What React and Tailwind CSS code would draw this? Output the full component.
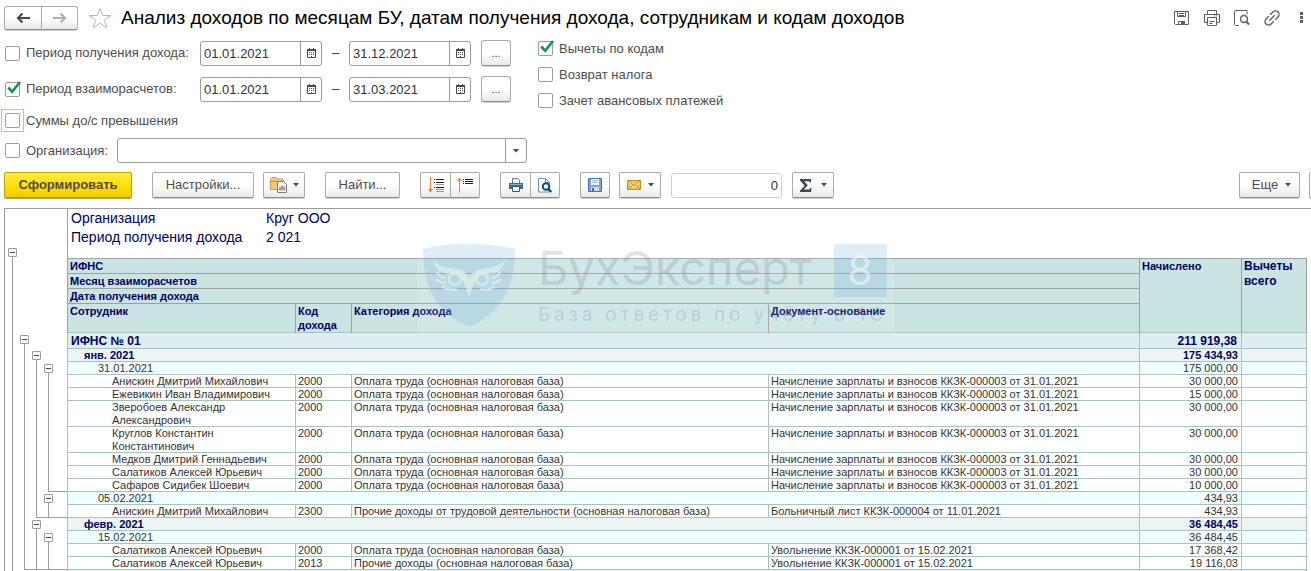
import React, { useState } from 'react';

const BTN = 'flex shrink-0 items-center justify-center border border-[#ababab] border-b-[#8f8f8f] bg-linear-to-b from-white from-50% to-[#e9e9e9] text-[#4d4d4d] shadow-[0_1px_0_#d0d0d0]';

// Строки отчета: level - уровень группировки, end - уровень, который закрывается этой строкой
const ROWS = [
    { level: 1, kind: 'ifns', name: 'ИФНС № 01', sum: '211 919,38' },
    { level: 2, kind: 'month', name: 'янв. 2021', sum: '175 434,93' },
    { level: 3, kind: 'date', name: '31.01.2021', sum: '175 000,00' },
    { kind: 'item', depth: 4, name: 'Анискин Дмитрий Михайлович', code: '2000', cat: 'Оплата труда (основная налоговая база)', doc: 'Начисление зарплаты и взносов ККЗК-000003 от 31.01.2021', sum: '30 000,00' },
    { kind: 'item', depth: 4, name: 'Ежевикин Иван Владимирович', code: '2000', cat: 'Оплата труда (основная налоговая база)', doc: 'Начисление зарплаты и взносов ККЗК-000003 от 31.01.2021', sum: '15 000,00' },
    { kind: 'item', depth: 4, name: 'Зверобоев Александр Александрович', code: '2000', cat: 'Оплата труда (основная налоговая база)', doc: 'Начисление зарплаты и взносов ККЗК-000003 от 31.01.2021', sum: '30 000,00' },
    { kind: 'item', depth: 4, name: 'Круглов Константин Константинович', code: '2000', cat: 'Оплата труда (основная налоговая база)', doc: 'Начисление зарплаты и взносов ККЗК-000003 от 31.01.2021', sum: '30 000,00' },
    { kind: 'item', depth: 4, name: 'Медков Дмитрий Геннадьевич', code: '2000', cat: 'Оплата труда (основная налоговая база)', doc: 'Начисление зарплаты и взносов ККЗК-000003 от 31.01.2021', sum: '30 000,00' },
    { kind: 'item', depth: 4, name: 'Салатиков Алексей Юрьевич', code: '2000', cat: 'Оплата труда (основная налоговая база)', doc: 'Начисление зарплаты и взносов ККЗК-000003 от 31.01.2021', sum: '30 000,00' },
    { kind: 'item', depth: 4, end: 3, name: 'Сафаров Сидибек Шоевич', code: '2000', cat: 'Оплата труда (основная налоговая база)', doc: 'Начисление зарплаты и взносов ККЗК-000003 от 31.01.2021', sum: '10 000,00' },
    { level: 3, kind: 'date', name: '05.02.2021', sum: '434,93' },
    { kind: 'item', depth: 4, end: 2, name: 'Анискин Дмитрий Михайлович', code: '2300', cat: 'Прочие доходы от трудовой деятельности (основная налоговая база)', doc: 'Больничный лист ККЗК-000004 от 11.01.2021', sum: '434,93' },
    { level: 2, kind: 'month', name: 'февр. 2021', sum: '36 484,45' },
    { level: 3, kind: 'date', name: '15.02.2021', sum: '36 484,45' },
    { kind: 'item', depth: 4, name: 'Салатиков Алексей Юрьевич', code: '2000', cat: 'Оплата труда (основная налоговая база)', doc: 'Увольнение ККЗК-000001 от 15.02.2021', sum: '17 368,42' },
    { kind: 'item', depth: 4, end: 1, name: 'Салатиков Алексей Юрьевич', code: '2013', cat: 'Прочие доходы (основная налоговая база)', doc: 'Увольнение ККЗК-000001 от 15.02.2021', sum: '19 116,03' },
];

const ROW_STYLES = {
    ifns: { row: 'bg-[#dceef0] text-xs leading-4 font-bold text-[#00005c]', name: 'pl-1', sum: 'pr-1' },
    month: { row: 'bg-[#edf5f4] text-[11px] leading-[13px] font-bold text-[#00005c]', name: 'pl-[17px]', sum: 'pr-[3px]' },
    date: { row: 'bg-[#f0ffff] text-[11px] leading-[13px] text-[#333]', name: 'pl-[31px]', sum: 'pr-[3px]' },
    item: { row: 'bg-white text-[11px] leading-[13px] text-[#333]', name: 'pl-[45px]', sum: 'pr-[3px]' },
};

const CELL = 'p-0 pl-[3px] align-top font-normal shadow-[inset_1px_-1px_0_#a9c5ba]';
const HEAD = 'p-0 pl-[3px] text-left align-top font-bold shadow-[inset_1px_-1px_0_#a0a0a0]';
const HEAD_LAST = 'p-0 pl-[3px] text-left align-top font-bold shadow-[inset_1px_0_0_#a0a0a0,inset_0_-1px_0_#a9c5ba]';

function Caret() {
    return (
        <svg width="6" height="4" viewBox="0 0 6 4" className="shrink-0" aria-hidden="true">
            <path d="M0 0h6L3 3.500z" fill="#4a4a4a" />
        </svg>
    );
}

function CheckBox({ id, label, defaultChecked = false, focused = false }) {
    return (
        <div className="flex items-center text-[13px] text-[#4d4d4d]">
            <span className={focused ? 'relative -m-1 mr-0 flex border border-[#f5c518] p-[3px]' : 'relative flex'}>
                <input id={id} type="checkbox" defaultChecked={defaultChecked} className="peer size-[15px] appearance-none rounded-[2px] border border-[#9c9c9c] bg-white" />
                <svg className="pointer-events-none absolute -top-px left-[2px] hidden peer-checked:block" width="15" height="14" viewBox="0 0 15 14" aria-hidden="true">
                    <path d="M1.200 6.500l4 4.300L13 1" fill="none" stroke="#0a9a4c" strokeWidth="2.600" />
                </svg>
            </span>
            <label htmlFor={id} className={focused ? 'pl-[2px] whitespace-nowrap' : 'pl-[6px] whitespace-nowrap'}>{label}</label>
        </div>
    );
}

function DateField({ label, value }) {
    return (
        <div className="flex h-[25px] w-[122px] shrink-0 rounded-[3px] border border-[#9c9c9c] bg-white">
            <input aria-label={label} defaultValue={value} className="w-[99px] pt-px pl-[3px] text-[13px] text-[#333] outline-none" />
            <button type="button" aria-label="Выбрать дату" className="flex flex-1 items-center justify-center border-l border-[#9c9c9c]">
                <svg width="9" height="10" viewBox="0 0 9 10" aria-hidden="true">
                    <path d="M.5 1.500h8v8h-8z" fill="none" stroke="#4a4a4a" />
                    <path d="M0 1h9v2H0zM2 0h1v1H2zM6 0h1v1H6z" fill="#4a4a4a" />
                    <path d="M2 4h1v1H2zM4 4h1v1H4zM6 4h1v1H6zM2 6h1v1H2zM4 6h1v1H4zM6 6h1v1H6zM4 8h1v1H4z" fill="#4a4a4a" />
                </svg>
            </button>
        </div>
    );
}

function PeriodRow({ id, label, from, to, checked }) {
    return (
        <div className="flex h-[26px] items-center">
            <div className="w-[195px]">
                <CheckBox id={id} label={label} defaultChecked={checked} />
            </div>
            <DateField label="Начало периода" value={from} />
            <span className="w-[27px] text-center text-[13px] text-[#333]">–</span>
            <DateField label="Конец периода" value={to} />
            <button type="button" aria-label="Выбрать период" className={`${BTN} ml-[10px] h-[26px] w-[30px] rounded-[3px] text-[11px]`}>...</button>
        </div>
    );
}

// Линии и кнопки группировок слева от таблицы
function Tree({ level, depth, end = 9 }) {
    return (
        <div className="flex h-full pl-px">
            {[0, 1, 2, 3].map((i) => (
                <div key={i} className={`flex w-3 flex-col ${i > end ? 'border-b border-[#9c9c9c]' : ''}`}>
                    {i === level && (
                        <button type="button" aria-label="Свернуть группу" className="mt-[2px] ml-[2px] flex size-[9px] shrink-0 items-center justify-center rounded-[1px] border border-[#9c9c9c] bg-white">
                            <span className="h-px w-[5px] bg-[#444]"></span>
                        </button>
                    )}
                    {i <= (level ?? depth) && (
                        <div className={`ml-[6px] flex-1 border-l border-[#9c9c9c] ${i === end ? 'border-b' : ''}`}></div>
                    )}
                </div>
            ))}
            <div className={`flex-1 ${end < 9 ? 'border-b border-[#9c9c9c]' : ''}`}></div>
        </div>
    );
}

function Watermark() {
    return (
        <svg className="pointer-events-none absolute top-[32px] left-[412px]" width="477" height="92" viewBox="0 0 477 92" aria-hidden="true">
            <rect width="477" height="92" fill="#fff" opacity=".12" />
            <g opacity=".2">
                <path d="M6 8C32 1 72 1 98 8C98 46 85 72 52 86C19 72 6 46 6 8z" fill="#5aa5d8" />
                <path d="M417 3h53v53h-53z" fill="#5aa5d8" />
            </g>
            <g fill="none" stroke="#e4f2ec" strokeOpacity=".65" strokeWidth="2.500">
                <circle cx="38" cy="38" r="6" />
                <circle cx="65" cy="38" r="6" />
                <path d="M20 31c2 4 5 6 9 6M19 38c3 3 6 4 10 4M25 45c4 3 9 5 15 3M83 31c-2 4-5 6-9 6M84 38c-3 3-6 4-10 4M78 45c-4 3-9 5-15 3" />
            </g>
            <path d="M16 19C24 27 32 27 40 28C47 29 50 33 52 38C54 33 57 29 64 28C72 27 80 27 88 19C86 29 80 33 70 33C62 33 58 38 56 45L52 56L48 45C46 38 42 33 34 33C24 33 18 29 16 19z" fill="#e4f2ec" fillOpacity=".65" />
            <g fill="#4b4b6b" fillOpacity=".17" className="font-[Inter,sans-serif]">
                <text x="121" y="44" fontSize="47">БухЭксперт</text>
                <text x="121" y="80" fontSize="19" className="tracking-[0.2em]">База ответов по учёту в 1С</text>
            </g>
            <text x="443" y="44" fontSize="41" textAnchor="middle" fill="#fff" fillOpacity=".5" className="font-[Inter,sans-serif]">8</text>
        </svg>
    );
}

function TitleIcons() {
    return (
        <div className="ml-auto flex items-center gap-[14px] pr-[4px] text-[#5f5f5f]">
            <button type="button" aria-label="Сохранить">
                <svg width="16" height="16" viewBox="0 0 16 16" fill="none" stroke="currentColor">
                    <path d="M.5 1.500h14v13h-13l-1-1zM3.500 1.500v5h8v-5M5 3.500h5M5 5.500h5M4.500 14.500v-3h6v3" />
                    <path d="M7 11h4v4H7z" fill="currentColor" stroke="none" />
                </svg>
            </button>
            <button type="button" aria-label="Печать">
                <svg width="16" height="16" viewBox="0 0 16 16" fill="none" stroke="currentColor">
                    <path d="M3.500 4.500v-4h9v4M3.500 12.500h-3v-8h15v8h-3M3.500 7.500h9v8h-9zM5.500 11.500h5M5.500 13.500h3M10 6h1M12 6h1" />
                </svg>
            </button>
            <button type="button" aria-label="Предварительный просмотр">
                <svg width="16" height="16" viewBox="0 0 16 16" fill="none" stroke="currentColor">
                    <path d="M5 15.500H1.500l-1-1v-13l1-1h11.500v4" />
                    <circle cx="10" cy="9" r="3.500" strokeWidth="1.400" />
                    <path d="M12.300 11.500l2.700 3" strokeWidth="2" />
                </svg>
            </button>
            <button type="button" aria-label="Получить ссылку">
                <svg width="16" height="16" viewBox="3 3 18 18" fill="none" stroke="currentColor" strokeWidth="1.600" strokeLinecap="round">
                    <g transform="rotate(-45 12 12)">
                        <path d="M10 16H6.500a4 4 0 0 1 0-8H10M14 8h3.500a4 4 0 0 1 0 8H14M8.500 12h7" />
                    </g>
                </svg>
            </button>
            <button type="button" aria-label="Меню" className="ml-[3px]">
                <svg width="10" height="16" viewBox="0 0 10 16" fill="currentColor">
                    <path d="M3 2h3v3H3zM3 6h3v3H3zM3 10h3v3H3z" />
                </svg>
            </button>
        </div>
    );
}

function Toolbar() {
    return (
        <div className="mt-[9px] flex items-center overflow-hidden pb-[2px] pl-1 text-[13px]">
            <button type="button" className="flex h-[26px] w-32 shrink-0 items-center justify-center rounded-[2px] border border-[#b9a100] bg-linear-to-b from-[#ffec3d] via-[#ffe000] to-[#efcb00] font-bold text-[#4d4d4d] shadow-[0_1px_0_#b0a050]">Сформировать</button>
            <button type="button" className={`${BTN} ml-5 h-[26px] w-[102px] rounded-[2px]`}>Настройки...</button>
            <button type="button" aria-label="Варианты отчета" className={`${BTN} ml-[9px] h-[26px] w-[42px] gap-[6px] rounded-[2px]`}>
                <svg width="17" height="16" viewBox="0 0 17 16" aria-hidden="true">
                    <path d="M.5 12.500v-10l1.500-2h4l1 1.500h5.500l1 1v9.500z" fill="#f2c878" stroke="#cf9a45" />
                    <path d="M1 4.500h12" stroke="#cf9a45" />
                    <path d="M7.500 4.500h6l3 3v8h-9z" fill="#fff" stroke="#6a8299" />
                    <path d="M10 10v3.500M14 9.500v4" stroke="#e0503a" strokeWidth="1.400" />
                    <path d="M12 8.500v5" stroke="#3aa05a" strokeWidth="1.400" />
                </svg>
                <Caret />
            </button>
            <button type="button" className={`${BTN} ml-5 h-[26px] w-[75px] rounded-[2px]`}>Найти...</button>
            <button type="button" aria-label="Развернуть группы" className={`${BTN} ml-5 h-[26px] w-[31px] rounded-l-[2px]`}>
                <svg width="16" height="16" viewBox="0 0 16 16" aria-hidden="true">
                    <path d="M2.500 0v12" stroke="#f0804a" />
                    <path d="M0 12h5l-2.500 3.500z" fill="#f0804a" />
                    <path d="M6 2.500h1M8 2.500h8M6 5.500h1M8 5.500h8M6 10.500h1M8 10.500h8" stroke="#222" />
                    <path d="M8 7.500h8M8 12.500h8M8 14.500h8" stroke="#999" />
                </svg>
            </button>
            <button type="button" aria-label="Свернуть группы" className={`${BTN} -ml-px h-[26px] w-[30px] rounded-r-[2px]`}>
                <svg width="16" height="16" viewBox="0 0 16 16" aria-hidden="true">
                    <path d="M2.500 15.500V3" stroke="#f0804a" />
                    <path d="M0 4h5L2.500.500z" fill="#f0804a" />
                    <path d="M6 2.500h1M8 2.500h8M6 4.500h1M8 4.500h8M6 6.500h1M8 6.500h8" stroke="#222" />
                </svg>
            </button>
            <button type="button" aria-label="Печать отчета" className={`${BTN} ml-5 h-[26px] w-[31px] rounded-l-[2px]`}>
                <svg width="14" height="14" viewBox="0 0 14 14" aria-hidden="true">
                    <path d="M3.500 5V.5h5l2 2V5" fill="#fff" stroke="#5a7690" />
                    <path d="M0 5h14v6H0z" fill="#3f6c95" />
                    <path d="M1 6.500h12" stroke="#86abcb" />
                    <path d="M3.500 8.500h7v5h-7z" fill="#fff" stroke="#35597c" />
                </svg>
            </button>
            <button type="button" aria-label="Просмотр отчета" className={`${BTN} -ml-px h-[26px] w-[30px] rounded-r-[2px]`}>
                <svg width="14" height="15" viewBox="0 0 14 15" aria-hidden="true">
                    <path d="M.5.5h7l4 4v9.500H.5z" fill="#fff" stroke="#7a8fa3" />
                    <path d="M7.500.5v4h4" fill="none" stroke="#7a8fa3" />
                    <circle cx="8" cy="8.500" r="3.200" fill="#fff" stroke="#0b5078" strokeWidth="2" />
                    <path d="M10.200 11l3 3" stroke="#0b5078" strokeWidth="2.400" />
                </svg>
            </button>
            <button type="button" aria-label="Сохранить отчет" className={`${BTN} ml-5 h-[26px] w-[30px] rounded-[2px]`}>
                <svg width="14" height="14" viewBox="0 0 14 14" aria-hidden="true">
                    <path d="M.5.500h13v13H.500z" fill="#7ea6d3" stroke="#476f9f" />
                    <path d="M3 1h8v6H3z" fill="#fff" />
                    <path d="M4 2.500h6M4 4.500h6" stroke="#9db8d4" />
                    <path d="M3 9h8v4H3z" fill="#d5dbe0" />
                    <path d="M4 10h2v3H4z" fill="#476f9f" />
                </svg>
            </button>
            <button type="button" aria-label="Отправить" className={`${BTN} ml-[9px] h-[26px] w-[42px] gap-[7px] rounded-[2px]`}>
                <svg width="14" height="10" viewBox="0 0 14 10" aria-hidden="true">
                    <path d="M.5.500h13v9H.500z" fill="#f5c55c" stroke="#c48a24" />
                    <path d="M1 1l6 5 6-5M1 9l4.500-4M13 9L8.500 5" fill="none" stroke="#c48a24" />
                    <path d="M1.500 2.500L7 7l5.500-4.500" fill="none" stroke="#fff2c8" />
                </svg>
                <Caret />
            </button>
            <input aria-label="Сумма выделенных ячеек" readOnly value="0" className="ml-[10px] h-[25px] w-[111px] shrink-0 rounded-[3px] border border-[#d0d0d0] pr-[3px] text-right text-[#333] outline-none" />
            <button type="button" aria-label="Показатели" className={`${BTN} ml-[10px] h-[26px] w-[42px] gap-[9px] rounded-[2px]`}>
                <svg width="12" height="13" viewBox="0 0 12 13" aria-hidden="true">
                    <path d="M0 0h11v3.500h-1.200L9 2.200H4.200L7.800 6.300 3.800 10.600H9.200L10.200 9h1.300L11 13H0v-1.200L4.600 6.700 0 1.400z" fill="#3a4a5a" />
                </svg>
                <Caret />
            </button>
            <button type="button" className={`${BTN} ml-auto h-[26px] w-[61px] gap-[7px] rounded-[2px] pl-1`}>Еще <Caret /></button>
            <button type="button" aria-label="Справка" className={`${BTN} -mr-[28px] ml-[9px] h-[26px] w-[30px] rounded-[2px]`}></button>
        </div>
    );
}

function Report() {
    return (
        <div className="relative mt-2 ml-1 min-h-0 flex-1 overflow-hidden border-t border-l border-[#9c9c9c] pr-1">
            <table className="w-full table-fixed border-separate border-spacing-0">
                <colgroup>
                    <col className="w-[62px]" />
                    <col className="w-[228px]" />
                    <col className="w-[56px]" />
                    <col className="w-[417px]" />
                    <col />
                    <col className="w-[102px]" />
                    <col className="w-[66px]" />
                </colgroup>
                <thead className="text-[11px] text-[#00005c]">
                    <tr>
                        <td className="h-[50px] p-0">
                            <div className="flex h-[50px] flex-col justify-end">
                                <div className="h-[13px]"><Tree level={0} /></div>
                            </div>
                        </td>
                        <td colSpan={6} className="p-0 pl-1 align-top shadow-[inset_1px_-1px_0_#a0a0a0]">
                            <dl className="grid grid-cols-[195px_1fr] text-sm leading-[19px]">
                                <dt>Организация</dt>
                                <dd>Круг ООО</dd>
                                <dt>Период получения дохода</dt>
                                <dd>2 021</dd>
                            </dl>
                        </td>
                    </tr>
                    <tr className="bg-[#cae4e4] leading-[15px]">
                        <td rowSpan={4} className="h-px bg-white p-0"><Tree depth={0} /></td>
                        <th colSpan={4} className={HEAD}>ИФНС</th>
                        <th rowSpan={4} className={HEAD_LAST}>Начислено</th>
                        <th rowSpan={4} className={`${HEAD_LAST} border-r border-[#a0a0a0] text-xs leading-[15px]`}>Вычеты всего</th>
                    </tr>
                    <tr className="bg-[#cae4e4] leading-[15px]">
                        <th colSpan={4} className={HEAD}>Месяц взаиморасчетов</th>
                    </tr>
                    <tr className="bg-[#cae4e4] leading-[15px]">
                        <th colSpan={4} className={HEAD}>Дата получения дохода</th>
                    </tr>
                    <tr className="h-[29px] bg-[#cae4e4] leading-[14px]">
                        <th className={HEAD_LAST}>Сотрудник</th>
                        <th className={HEAD_LAST}>Код дохода</th>
                        <th className={HEAD_LAST}>Категория дохода</th>
                        <th className={HEAD_LAST}>Документ-основание</th>
                    </tr>
                </thead>
                <tbody>
                    {ROWS.map((r, i) => {
                        const s = ROW_STYLES[r.kind];
                        return (
                            <tr key={i} className={s.row}>
                                <td className="h-px bg-white p-0"><Tree level={r.level} depth={r.depth} end={r.end} /></td>
                                {r.kind === 'item' ? (
                                    <>
                                        <td className={`p-0 pr-6 align-top shadow-[inset_1px_-1px_0_#a9c5ba] ${s.name}`}>{r.name}</td>
                                        <td className={CELL}>{r.code}</td>
                                        <td className={CELL}>{r.cat}</td>
                                        <td className={CELL}>{r.doc}</td>
                                    </>
                                ) : (
                                    <td colSpan={4} className={`p-0 align-top shadow-[inset_1px_-1px_0_#a9c5ba] ${s.name}`}>{r.name}</td>
                                )}
                                <td className={`p-0 text-right align-top shadow-[inset_1px_-1px_0_#a9c5ba] ${s.sum}`}>{r.sum}</td>
                                <td className="border-r border-[#a9c5ba] p-0 shadow-[inset_1px_-1px_0_#a9c5ba]"></td>
                            </tr>
                        );
                    })}
                    <tr className="h-[13px] bg-[#dceef0]">
                        <td className="h-px bg-white p-0"><Tree depth={0} /></td>
                        <td colSpan={4} className={CELL}></td>
                        <td className={CELL}></td>
                        <td className={`${CELL} border-r border-[#a9c5ba]`}></td>
                    </tr>
                </tbody>
            </table>
            <Watermark />
        </div>
    );
}

export default function App() {
    const [favorite, setFavorite] = useState(false);

    return (
        <div className="flex h-screen flex-col overflow-hidden bg-white font-['Liberation_Sans',Arial,sans-serif]">
            {/* Заголовок */}
            <header className="flex h-9 items-center pl-1">
                <div className="flex">
                    <button type="button" aria-label="Назад" className={`${BTN} h-6 w-[38px] rounded-l-[3px]`}>
                        <svg width="14" height="12" viewBox="0 0 14 12" aria-hidden="true">
                            <path d="M14 6H3M6.500 1.500L2 6l4.500 4.500" fill="none" stroke="#4a4a4a" strokeWidth="2.200" />
                        </svg>
                    </button>
                    <button type="button" aria-label="Вперед" className={`${BTN} -ml-px h-6 w-[37px] rounded-r-[3px]`}>
                        <svg width="14" height="12" viewBox="0 0 14 12" aria-hidden="true">
                            <path d="M0 6h11M7.500 1.500L12 6l-4.500 4.500" fill="none" stroke="#b0b0b0" strokeWidth="2.200" />
                        </svg>
                    </button>
                </div>
                <button type="button" aria-label="Добавить в избранное" aria-pressed={favorite} onClick={() => setFavorite(!favorite)} className="ml-[10px]">
                    <svg width="24" height="22" viewBox="0 0 24 22" aria-hidden="true">
                        <path d="M12 1.500l2.700 7H22.500l-6.200 4.700 2.300 7.500L12 16.200l-6.600 4.500 2.300-7.500L1.500 8.500h7.800z" fill={favorite ? '#ffd83d' : '#fff'} stroke="#b4bac2" />
                    </svg>
                </button>
                <h1 className="ml-[9px] text-[19px] whitespace-nowrap text-black">Анализ доходов по месяцам БУ, датам получения дохода, сотрудникам и кодам доходов</h1>
                <TitleIcons />
            </header>

            {/* Отборы */}
            <section className="mt-1 flex pl-[5px]">
                <div className="w-[522px]">
                    <PeriodRow id="period-income" label="Период получения дохода:" from="01.01.2021" to="31.12.2021" />
                    <div className="mt-[10px]">
                        <PeriodRow id="period-settle" label="Период взаиморасчетов:" from="01.01.2021" to="31.03.2021" checked />
                    </div>
                    <div className="mt-[7px] flex h-[23px] items-center">
                        <CheckBox id="excess" label="Суммы до/с превышения" focused />
                    </div>
                    <div className="mt-[6px] flex h-[25px] items-center">
                        <div className="w-28">
                            <CheckBox id="use-org" label="Организация:" />
                        </div>
                        <div className="relative flex h-[25px] flex-1 rounded-[3px] border border-[#9c9c9c]">
                            <select aria-label="Организация" className="w-full appearance-none pl-1 text-[13px] outline-none"></select>
                            <span className="pointer-events-none absolute inset-y-0 right-0 flex w-[21px] items-center justify-center border-l border-[#9c9c9c]"><Caret /></span>
                        </div>
                    </div>
                </div>
                <div className="ml-[11px] flex flex-col gap-[11px] pt-px">
                    <div className="flex h-[15px] items-center"><CheckBox id="deductions" label="Вычеты по кодам" defaultChecked /></div>
                    <div className="flex h-[15px] items-center"><CheckBox id="refund" label="Возврат налога" /></div>
                    <div className="flex h-[15px] items-center"><CheckBox id="advance" label="Зачет авансовых платежей" /></div>
                </div>
            </section>

            <Toolbar />
            <Report />
        </div>
    );
}
